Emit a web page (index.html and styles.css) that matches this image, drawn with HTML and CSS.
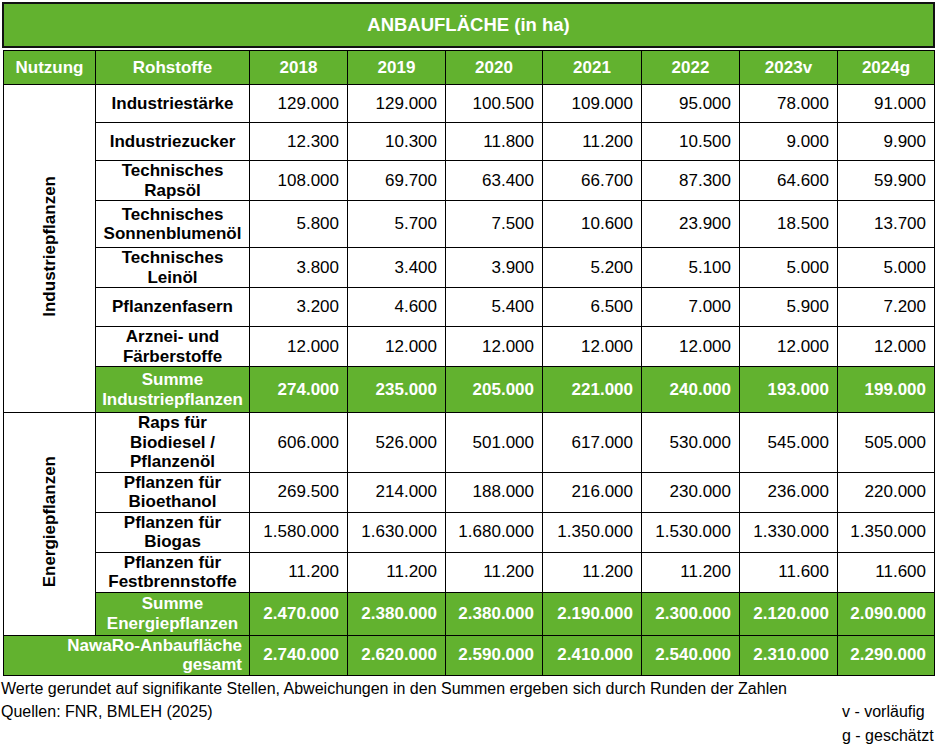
FILE: index.html
```html
<!DOCTYPE html>
<html lang="de">
<head>
<meta charset="utf-8">
<title>Anbaufläche</title>
<link rel="stylesheet" href="styles.css">
</head>
<body>
<div class="page">
  <div class="title">ANBAUFLÄCHE (in ha)</div>
  <table class="grid">
    <colgroup>
      <col class="c-nutz"><col class="c-roh">
      <col class="c-y"><col class="c-y"><col class="c-y2"><col class="c-y3"><col class="c-y"><col class="c-y"><col class="c-y2">
    </colgroup>
    <thead>
      <tr class="h-head">
        <th>Nutzung</th><th>Rohstoffe</th><th>2018</th><th>2019</th><th>2020</th><th>2021</th><th>2022</th><th>2023v</th><th>2024g</th>
      </tr>
    </thead>
    <tbody>
      <tr class="h38">
        <td class="group" rowspan="8"><span class="vert">Industriepflanzen</span></td>
        <td class="lbl">Industriestärke</td><td>129.000</td><td>129.000</td><td>100.500</td><td>109.000</td><td>95.000</td><td>78.000</td><td>91.000</td>
      </tr>
      <tr class="h38">
        <td class="lbl">Industriezucker</td><td>12.300</td><td>10.300</td><td>11.800</td><td>11.200</td><td>10.500</td><td>9.000</td><td>9.900</td>
      </tr>
      <tr class="h40">
        <td class="lbl">Technisches<br>Rapsöl</td><td>108.000</td><td>69.700</td><td>63.400</td><td>66.700</td><td>87.300</td><td>64.600</td><td>59.900</td>
      </tr>
      <tr class="h47">
        <td class="lbl">Technisches<br>Sonnenblumenöl</td><td>5.800</td><td>5.700</td><td>7.500</td><td>10.600</td><td>23.900</td><td>18.500</td><td>13.700</td>
      </tr>
      <tr class="h40">
        <td class="lbl">Technisches<br>Leinöl</td><td>3.800</td><td>3.400</td><td>3.900</td><td>5.200</td><td>5.100</td><td>5.000</td><td>5.000</td>
      </tr>
      <tr class="h39">
        <td class="lbl">Pflanzenfasern</td><td>3.200</td><td>4.600</td><td>5.400</td><td>6.500</td><td>7.000</td><td>5.900</td><td>7.200</td>
      </tr>
      <tr class="h39">
        <td class="lbl">Arznei- und<br>Färberstoffe</td><td>12.000</td><td>12.000</td><td>12.000</td><td>12.000</td><td>12.000</td><td>12.000</td><td>12.000</td>
      </tr>
      <tr class="h46 sum">
        <td class="lbl">Summe<br>Industriepflanzen</td><td>274.000</td><td>235.000</td><td>205.000</td><td>221.000</td><td>240.000</td><td>193.000</td><td>199.000</td>
      </tr>
      <tr class="h59">
        <td class="group" rowspan="5"><span class="vert">Energiepflanzen</span></td>
        <td class="lbl">Raps für<br>Biodiesel /<br>Pflanzenöl</td><td>606.000</td><td>526.000</td><td>501.000</td><td>617.000</td><td>530.000</td><td>545.000</td><td>505.000</td>
      </tr>
      <tr class="h40">
        <td class="lbl">Pflanzen für<br>Bioethanol</td><td>269.500</td><td>214.000</td><td>188.000</td><td>216.000</td><td>230.000</td><td>236.000</td><td>220.000</td>
      </tr>
      <tr class="h40">
        <td class="lbl">Pflanzen für<br>Biogas</td><td>1.580.000</td><td>1.630.000</td><td>1.680.000</td><td>1.350.000</td><td>1.530.000</td><td>1.330.000</td><td>1.350.000</td>
      </tr>
      <tr class="h40">
        <td class="lbl">Pflanzen für<br>Festbrennstoffe</td><td>11.200</td><td>11.200</td><td>11.200</td><td>11.200</td><td>11.200</td><td>11.600</td><td>11.600</td>
      </tr>
      <tr class="h43 sum">
        <td class="lbl">Summe<br>Energiepflanzen</td><td>2.470.000</td><td>2.380.000</td><td>2.380.000</td><td>2.190.000</td><td>2.300.000</td><td>2.120.000</td><td>2.090.000</td>
      </tr>
      <tr class="h40 sum total">
        <td class="lbl-right" colspan="2">NawaRo-Anbaufläche<br>gesamt</td><td>2.740.000</td><td>2.620.000</td><td>2.590.000</td><td>2.410.000</td><td>2.540.000</td><td>2.310.000</td><td>2.290.000</td>
      </tr>
    </tbody>
  </table>
  <div class="notes">
    <div class="note-main">Werte gerundet auf signifikante Stellen, Abweichungen in den Summen ergeben sich durch Runden der Zahlen</div>
    <div class="note-row">
      <div>Quellen: FNR, BMLEH (2025)</div>
      <div class="legend">v - vorläufig<br>g - geschätzt</div>
    </div>
  </div>
</div>
</body>
</html>
```

FILE: styles.css
```css
html, body {
  margin: 0;
  padding: 0;
  background: #fff;
}
body {
  font-family: "Liberation Sans", Arial, sans-serif;
  color: #000;
}
.page {
  width: 938px;
  padding-top: 2px;
}
.title {
  box-sizing: border-box;
  margin-left: 2px;
  width: 933px;
  height: 46px;
  border: 2px solid #111;
  background: #62b22f;
  color: #fff;
  font-weight: bold;
  font-size: 18.5px;
  display: flex;
  align-items: center;
  justify-content: center;
}
.grid {
  margin-top: 2px;
  margin-left: 3px;
  border-collapse: collapse;
  table-layout: fixed;
  width: 931px;
  font-size: 17px;
}
.c-nutz { width: 92px; }
.c-roh { width: 154px; }
.c-y { width: 98px; }
.c-y2 { width: 97px; }
.c-y3 { width: 99px; }
.grid th, .grid td {
  border: 1px solid #000;
  padding: 0 8px 0 0;
  line-height: 19.5px;
  text-align: right;
  white-space: nowrap;
}
.grid th {
  background: #62b22f;
  color: #fff;
  font-weight: bold;
  text-align: center;
  padding: 0;
}
.h-head { height: 34px; }
.h38 { height: 38px; }
.h39 { height: 39px; }
.h40 { height: 40px; }
.h43 { height: 43px; }
.h46 { height: 46px; }
.h47 { height: 47px; }
.h59 { height: 59px; }
.grid td.lbl {
  text-align: center;
  font-weight: bold;
  padding: 0;
}
.grid td.group {
  padding: 0;
  text-align: center;
  vertical-align: middle;
}
.vert {
  display: inline-block;
  writing-mode: vertical-rl;
  transform: rotate(180deg);
  font-weight: bold;
  line-height: 20px;
}
.sum td {
  background: #62b22f;
  color: #fff;
  font-weight: bold;
}
.grid td.lbl-right {
  font-weight: bold;
  text-align: right;
  padding-right: 7px;
}
.notes {
  font-size: 16px;
  line-height: 23.5px;
  padding-top: 1px;
  padding-left: 1px;
}
.note-row {
  display: grid;
  grid-template-columns: 1fr 96px;
}
```
